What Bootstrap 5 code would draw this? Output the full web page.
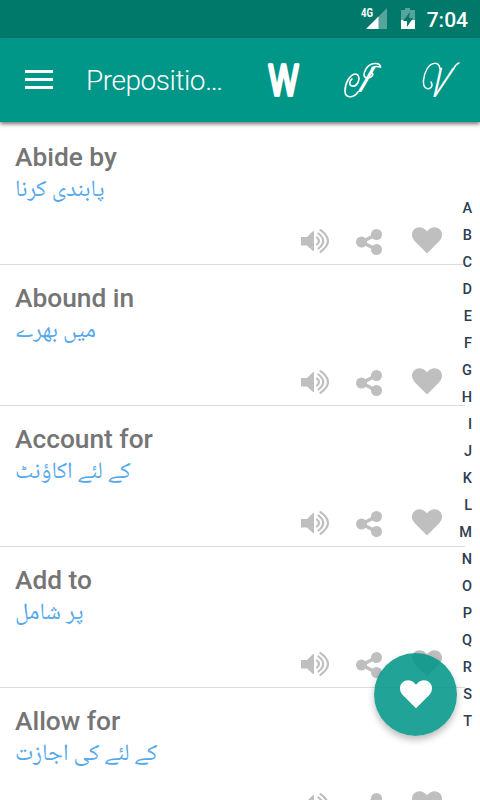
<!DOCTYPE html>
<html lang="en">
<head>
<meta charset="utf-8">
<meta name="viewport" content="width=device-width, initial-scale=1">
<title>Prepositions</title>
<link href="https://cdn.jsdelivr.net/npm/bootstrap@5.3.0/dist/css/bootstrap.min.css" rel="stylesheet">
<style>
body{font-family:Roboto,sans-serif;height:800px;background:#fff}
svg{display:block;flex:none;overflow:visible}
.status{height:38px;background:#00796b;padding-right:12px}
.clock{font-size:21px;font-weight:500;line-height:38px;margin:1px 0 0 10px}
.battery{margin-top:-2px}
.appbar{height:84px;background:#009688;box-shadow:0 2px 4px rgba(0,0,0,.55);z-index:2;padding-left:25px}
.app-title{font-size:28px;font-weight:300;line-height:84px;margin:2px 0 0 33px;letter-spacing:-.45px;width:150px}
.tool{width:78px;height:84px}
.phrases{margin-top:2px;width:465px}
.phrase{height:141px;border-bottom:1px solid #dcdcdc;padding:17px 0 0 15px}
.phrase h2{font-size:26.3px;font-weight:500;line-height:32px;color:#757575;margin:0}
.urdu{font-family:"Noto Naskh Arabic","Noto Sans Arabic","DejaVu Sans",sans-serif;font-size:23.400px;line-height:36px;height:32px;color:#55a8ea}
.actions{margin-top:19px;padding-right:23px;height:32px;color:#bfbfbf}
.sound-icon{margin-top:2px}
.share-icon{margin:3px 30px 0 27px}
.index{right:8px;top:195px;color:#2c3e50;font-size:14.500px;font-weight:500}
.index a{height:27px;line-height:27px}
.fab{left:374px;top:653px;width:83px;height:83px;background:rgba(0,150,136,.87);box-shadow:0 4px 7px rgba(0,0,0,.26);z-index:3}
</style>
</head>
<body class="position-relative overflow-hidden d-flex flex-column">
<svg width="0" height="0" class="position-absolute" aria-hidden="true">
<symbol id="heart" viewBox="0 0 30 27"><path d="M15 26.500L2.800 14.200C-.9 10.300-.8 5.100 2.300 2.200C5.500-.8 11-.8 15 4.300C19-.8 24.500-.8 27.700 2.200C30.800 5.100 30.900 10.300 27.200 14.200Z"/></symbol>
<symbol id="share" viewBox="0 0 26 26"><path d="M20 5.500L6 13L20 20.500" fill="none" stroke="currentColor" stroke-width="3.500"/><circle cx="5.500" cy="13" r="5.500"/><circle cx="20.500" cy="5.500" r="5.500"/><circle cx="20.500" cy="20.500" r="5.500"/></symbol>
<symbol id="sound" viewBox="0 0 28 24"><path d="M0 8H6L11.500 2.500Q13 1.300 13 2.500V21.500Q13 22.700 11.500 21.500L6 16.500H0Z"/><g fill="none" stroke="currentColor" stroke-width="2.200" stroke-linecap="round"><path d="M16 8.500Q20 12 16 15.500"/><path d="M17.500 4.500Q27 12 17.500 19.500"/><path d="M19.500 1.200Q34.500 12 19.500 22.800"/></g></symbol>
</svg>
<header class="status d-flex align-items-center justify-content-end text-white flex-shrink-0">
<svg width="27" height="24" viewBox="0 0 27 24"><path d="M27 1V22H6Z" fill="#fff" opacity=".33"/><path d="M18.500 9.500V22H6Z" fill="#fff"/><text x="1" y="10" font-size="12" font-weight="700" fill="#fff" textLength="12" lengthAdjust="spacingAndGlyphs">4G</text></svg>
<svg class="battery ms-2" width="22" height="24" viewBox="0 0 22 24"><path d="M6 4H10V2H15V4H20V23H6Z" fill="#fff" opacity=".33"/><path d="M6 14H20V23H6Z" fill="#fff"/><path d="M15 6L8 15H12V21L18 12H14Z" fill="#00796b"/></svg>
<span class="clock">7:04</span>
</header>
<nav class="appbar position-relative d-flex align-items-center flex-shrink-0 text-white">
<svg width="28" height="20" viewBox="0 0 28 20"><path d="M0 1.500H28M0 9.500H28M0 17.500H28" stroke="#fff" stroke-width="3"/></svg>
<div class="app-title">Prepositio…</div>
<a class="tool ms-auto d-flex justify-content-center align-items-center"><svg width="40" height="40" viewBox="0 0 40 40"><text transform="translate(3.500 34.500) scale(.76 1)" font-family="Inter" font-weight="300" font-size="41" fill="#fff" stroke="#fff" stroke-width="4.200" stroke-linejoin="round">W</text></svg></a>
<a class="tool d-flex justify-content-center align-items-center"><svg width="40" height="40" viewBox="0 0 40 40" fill="none" stroke="#fff" stroke-width="1.600" stroke-linecap="round"><text transform="translate(11.500 32) skewX(-30)" font-family="Lato" font-weight="400" font-size="35" fill="#fff" stroke="none">I</text><path d="M29 8C31 5 36 7 37.500 7C37 2 27 2 23 9C20 14 20 18 25 18C29 18 31 14 29 13M15 32C10 39 2 38 2 31C2 23 7 14 13 14C19 16 15 27 9 26C6 25 6 21 9 19"/></svg></a>
<a class="tool d-flex justify-content-center align-items-center"><svg width="40" height="40" viewBox="0 0 40 40" fill="none" stroke="#fff" stroke-width="1.500" stroke-linecap="round"><text transform="translate(5.800 37) skewX(-24) scale(.55 1)" font-family="Lato" font-weight="400" font-size="41" fill="#fff" stroke="none">V</text><path d="M19 9C18 1 10 2 6 9C2 16 1 26 5 28C8 30 13 27 10 22M33 8Q35 4 38 3"/></svg></a>
</nav>
<main class="phrases flex-shrink-0" id="list"></main>
<nav class="index position-absolute d-flex flex-column align-items-end" id="letters"></nav>
<button class="fab btn rounded-circle border-0 position-absolute p-0 d-flex align-items-center justify-content-center text-white"><svg width="32" height="29" fill="currentColor"><use href="#heart"/></svg></button>
<script src="https://cdn.jsdelivr.net/npm/bootstrap@5.3.0/dist/js/bootstrap.bundle.min.js"></script>
<script>
const phrases=[["Abide by","پابندی کرنا"],["Abound in","میں بھرے"],["Account for","کے لئے اکاؤنٹ"],["Add to","پر شامل"],["Allow for","کے لئے کی اجازت"]];
document.getElementById('list').innerHTML=phrases.map(([en,ur])=>`<article class="phrase"><h2>${en}</h2><div class="urdu"><span lang="ur" dir="rtl">${ur}</span></div><div class="actions d-flex align-items-center justify-content-end"><svg class="sound-icon" width="28" height="24" fill="currentColor"><use href="#sound"/></svg><svg class="share-icon" width="26" height="26" fill="currentColor"><use href="#share"/></svg><svg width="30" height="27" fill="currentColor"><use href="#heart"/></svg></div></article>`).join('');
document.getElementById('letters').innerHTML=[...'ABCDEFGHIJKLMNOPQRST'].map(c=>`<a class="d-block text-reset text-decoration-none">${c}</a>`).join('');
</script>
</body>
</html>
